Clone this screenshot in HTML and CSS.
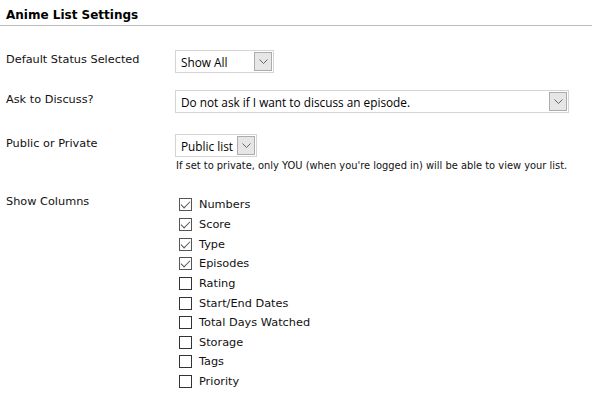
FILE: index.html
```html
<!DOCTYPE html>
<html lang="en">
<head>
    <meta charset="UTF-8">
    <title>Anime List Settings</title>
    <link rel="stylesheet" href="styles.css">
</head>
<body>

    <!-- Settings header -->
    <h1 class="settings-title">Anime List Settings</h1>

    <div class="settings">
        <!-- Default status -->
        <div class="row row-status">
            <div class="label">Default Status Selected</div>
            <div class="field">
                <div class="select select-status">
                    <span class="select-value">Show All</span>
                    <span class="select-arrow"><svg width="9" height="5" viewBox="0 0 9 5"><path d="M0.5 0.5 L4.5 4.5 L8.5 0.5" fill="none" stroke="#666" stroke-width="1"/></svg></span>
                </div>
            </div>
        </div>

        <!-- Discuss -->
        <div class="row row-discuss">
            <div class="label">Ask to Discuss?</div>
            <div class="field">
                <div class="select select-discuss">
                    <span class="select-value">Do not ask if I want to discuss an episode.</span>
                    <span class="select-arrow"><svg width="9" height="5" viewBox="0 0 9 5"><path d="M0.5 0.5 L4.5 4.5 L8.5 0.5" fill="none" stroke="#666" stroke-width="1"/></svg></span>
                </div>
            </div>
        </div>

        <!-- Public / private -->
        <div class="row row-public">
            <div class="label">Public or Private</div>
            <div class="field">
                <div class="select select-public">
                    <span class="select-value">Public list</span>
                    <span class="select-arrow"><svg width="9" height="5" viewBox="0 0 9 5"><path d="M0.5 0.5 L4.5 4.5 L8.5 0.5" fill="none" stroke="#666" stroke-width="1"/></svg></span>
                </div>
                <div class="hint">If set to private, only YOU (when you're logged in) will be able to view your list.</div>
            </div>
        </div>

        <!-- Columns -->
        <div class="row row-columns">
            <div class="label">Show Columns</div>
            <div class="field">
                <ul class="columns">
                    <li><span class="box checked"></span>Numbers</li>
                    <li><span class="box checked"></span>Score</li>
                    <li><span class="box checked"></span>Type</li>
                    <li><span class="box checked"></span>Episodes</li>
                    <li><span class="box"></span>Rating</li>
                    <li><span class="box"></span>Start/End Dates</li>
                    <li><span class="box"></span>Total Days Watched</li>
                    <li><span class="box"></span>Storage</li>
                    <li><span class="box"></span>Tags</li>
                    <li><span class="box"></span>Priority</li>
                </ul>
            </div>
        </div>
    </div>

</body>
</html>
```

FILE: styles.css
```css
/* Reset */
* {
    margin: 0;
    padding: 0;
    box-sizing: border-box;
}

body {
    background: #fff;
    color: #111;
    font-family: 'DejaVu Sans', Verdana, sans-serif;
    font-size: 11.3px;
}

/* Header */
.settings-title {
    font-size: 12px;
    font-weight: bold;
    color: #000;
    padding: 9px 6px 4px;
    border-bottom: 1px solid #bbb;
    line-height: 12px;
}

/* Rows */
.row {
    display: grid;
    grid-template-columns: 169px 1fr;
    padding-left: 6px;
}

.row-status {
    margin-top: 24px;
}

.row-discuss {
    margin-top: 17px;
}

.row-public {
    margin-top: 21px;
}

.row-columns {
    margin-top: 24px;
}

.label {
    padding-top: 3px;
    line-height: 14px;
}

.row-columns .label {
    padding-top: 0;
}

/* Fake select boxes */
.select {
    display: flex;
    align-items: stretch;
    height: 23px;
    border: 1px solid #d5d5d5;
    font-family: 'Open Sans', 'Liberation Sans', sans-serif;
    font-size: 11.8px;
    color: #000;
}

.select-value {
    flex: 1;
    padding: 3px 0 0 5px;
}

.select-arrow {
    display: flex;
    align-items: center;
    justify-content: center;
    width: 18px;
    margin: 1px;
    background: #e6e6e6;
    border: 1px solid #acacac;
}

.select-status {
    width: 99px;
}

.select-discuss {
    width: 394px;
}

.select-public {
    width: 82px;
}

.hint {
    font-size: 9.9px;
    margin-top: 3px;
    padding-left: 1px;
}

/* Column checkboxes */
.columns {
    list-style: none;
    padding-left: 4px;
}

.columns li {
    display: flex;
    align-items: center;
    height: 19.65px;
}

.box {
    width: 13px;
    height: 13px;
    border: 1px solid #333;
    margin-right: 7px;
    position: relative;
}

.box.checked {
    border-color: #555;
}

.box.checked::after {
    content: '';
    position: absolute;
    left: 1px;
    top: 0;
    width: 8px;
    height: 4px;
    border-left: 1px solid #555;
    border-bottom: 1px solid #555;
    transform: translate(0, 2px) rotate(-45deg);
}
```
